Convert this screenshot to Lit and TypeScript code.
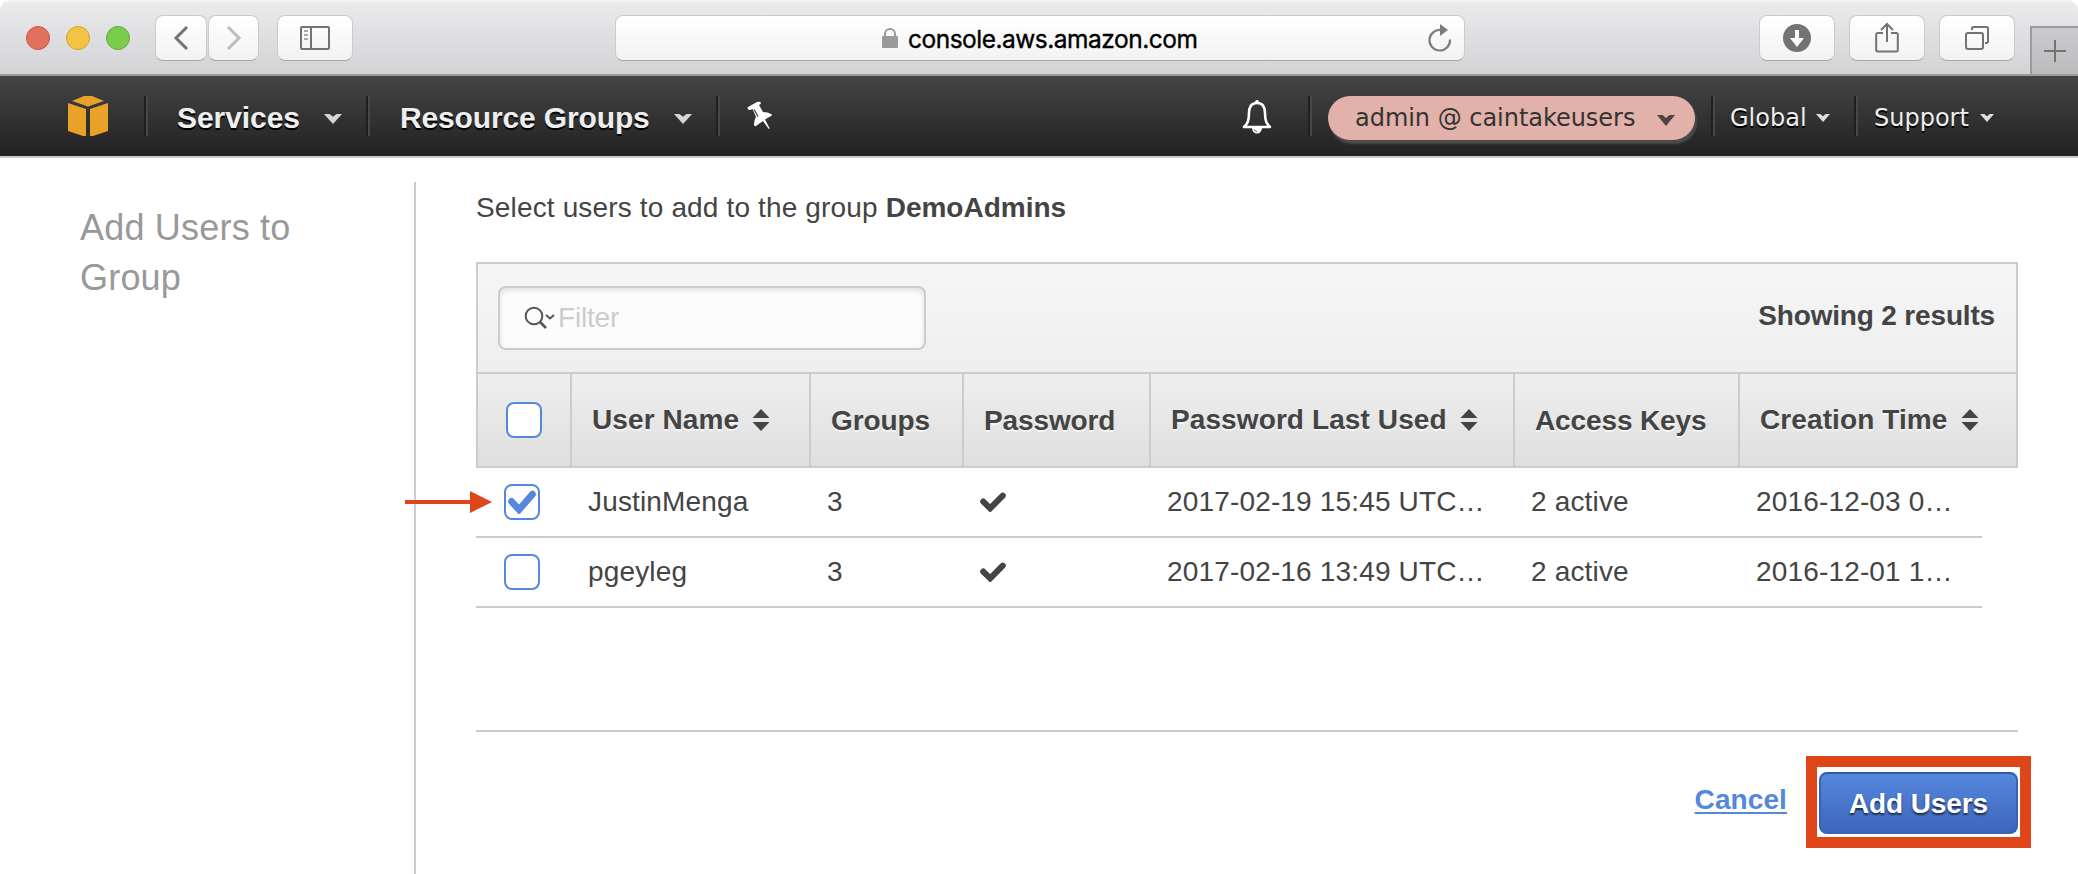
import { LitElement, html, css } from "lit";
import { customElement } from "lit/decorators.js";

const caret = (w: number, h: number, color: string) => html`<svg width=${w} height=${h} viewBox="0 0 18 10" preserveAspectRatio="none"><path d="M0 0H5.500L9 2.800L12.500 0H18L9 10Z" fill=${color}/></svg>`;
const sort = html`<svg class="sort" width="18" height="22" viewBox="0 0 18 22"><path d="M9 0L17.5 9H.5ZM.5 13H17.5L9 22Z" fill="#444"/></svg>`;
const tick = (w: number, h: number, color: string) => html`<svg width=${w} height=${h} viewBox="0 0 28 22" preserveAspectRatio="none"><path d="M3.5 10.5L11 18L24.5 4" fill="none" stroke=${color} stroke-width="6.6" stroke-linejoin="miter" stroke-linecap="round"/></svg>`;

@customElement("browser-bar")
export class BrowserBar extends LitElement {
  static styles = css`
    :host { display: block; background: #fff; }
    .bar { height: 76px; box-sizing: border-box; display: flex; align-items: flex-start; border-bottom: 2px solid #9b9b9b; border-radius: 11px 11px 0 0; overflow: hidden;
      background: linear-gradient(#f7f7f7 0, #ebebed 3px, #e3e3e5 24px, #d3d3d5 74px); }
    .dots { display: flex; gap: 16px; padding: 26px 0 0 26px; width: 129px; box-sizing: border-box; }
    .dot { width: 24px; height: 24px; border-radius: 50%; box-sizing: border-box; flex: none; border: 1px solid; }
    .red { background: #e2705f; border-color: #cc5646; }
    .yellow { background: #f1c443; border-color: #d5a22f; }
    .green { background: #7bcb4d; border-color: #5dac33; }
    .btn { height: 46px; margin-top: 15px; border-radius: 8px; background: linear-gradient(#fff, #f2f2f2); box-sizing: border-box; border: 1px solid #cbcbcd; border-bottom-color: #a9a9ab; display: flex; align-items: center; justify-content: center; flex: none; }
    .back { width: 52px; margin-left: 26px; }
    .fwd { width: 51px; margin-left: 1px; }
    .side { width: 76px; margin-left: 18px; }
    .url { width: 850px; margin-left: 262px; padding: 0 12px 0 266px; font: 400 24.5px/44px Inter, sans-serif; color: #000; justify-content: flex-start; }
    .host { margin-left: 10px; letter-spacing: -0.5px; flex: 1; -webkit-text-stroke: .35px #000; padding-top: 2px; }
    .tool { width: 76px; margin-left: 14px; }
    .first { margin-left: 294px; }
    .plus { margin: 26px 0 0 15px; width: 48px; height: 50px; box-sizing: border-box; border: solid #9c9c9e; border-width: 2px 0 0 2px; background: linear-gradient(#cbcbcd, #bbbbbd); padding: 12px 0 0 12px; flex: none; }
    svg { display: block; flex: none; }
  `;
  render() {
    return html`<div class="bar">
      <div class="dots"><i class="dot red"></i><i class="dot yellow"></i><i class="dot green"></i></div>
      <div class="btn back"><svg width="16" height="26" viewBox="0 0 16 26"><path d="M14 2L3 13L14 24" fill="none" stroke="#737373" stroke-width="3"/></svg></div>
      <div class="btn fwd"><svg width="16" height="26" viewBox="0 0 16 26"><path d="M2 2L13 13L2 24" fill="none" stroke="#bdbdbd" stroke-width="3"/></svg></div>
      <div class="btn side"><svg width="30" height="24" viewBox="0 0 30 24"><rect x="1" y="1" width="28" height="22" rx="1" fill="none" stroke="#737373" stroke-width="2"/><path d="M11 1V23" stroke="#737373" stroke-width="2"/><path d="M4 5H8M4 9H8M4 13H8" stroke="#909090" stroke-width="1.6"/></svg></div>
      <div class="btn url"><svg width="16" height="20" viewBox="0 0 16 20"><rect y="8" width="16" height="12" rx="1" fill="#9a9a9a"/><path d="M3 9V6a5 5 0 0 1 10 0V9" fill="none" stroke="#9a9a9a" stroke-width="2"/></svg><span class="host">console.aws.amazon.com</span>
        <svg width="24" height="28" viewBox="0 0 24 28"><path d="M13 6A10.300 10.300 0 1 0 22 15.500" fill="none" stroke="#7d7d7d" stroke-width="2.2"/><path d="M12 0L20 6L12 12Z" fill="#7d7d7d"/></svg></div>
      <div class="btn tool first"><svg width="28" height="28" viewBox="0 0 28 28"><circle cx="14" cy="14" r="14" fill="#737373"/><path d="M12 6H16V14H21L14 23L7 14H12Z" fill="#fbfbfb"/></svg></div>
      <div class="btn tool"><svg width="24" height="32" viewBox="0 0 24 32"><path d="M8 11H2.500Q1.200 11 1.200 12.500V28Q1.200 29.500 2.500 29.500H21.500Q22.800 29.500 22.800 28V12.500Q22.800 11 21.500 11H16M12 20V2M6 8L12 2L18 8" fill="none" stroke="#737373" stroke-width="2"/></svg></div>
      <div class="btn tool"><svg width="24" height="24" viewBox="0 0 24 24"><rect x="1" y="7" width="17" height="16" rx="2" fill="none" stroke="#737373" stroke-width="2"/><path d="M7 4V2.500Q7 1 8.500 1H21.500Q23 1 23 2.500V15Q23 17 21.500 17H20" fill="none" stroke="#737373" stroke-width="2"/></svg></div>
      <div class="plus"><svg width="22" height="22" viewBox="0 0 22 22"><path d="M11 0V22M0 11H22" stroke="#737373" stroke-width="2"/></svg></div>
    </div>`;
  }
}

@customElement("console-nav")
export class ConsoleNav extends LitElement {
  static styles = css`
    :host { display: block; }
    .nav { height: 82px; box-sizing: border-box; border-bottom: 2px solid #ccc; background: linear-gradient(#444, #222); display: flex; align-items: center; padding-left: 68px; color: #eee; font: 24px/40px "DejaVu Sans", Verdana, sans-serif; text-shadow: 0 2px 0 #000; white-space: nowrap; }
    svg { display: block; flex: none; }
    .item { height: 40px; box-sizing: border-box; display: flex; align-items: center; flex: none; }
    .item span { flex: none; }
    .menu { font: bold 30px/40px "Liberation Sans", Arial, sans-serif; border-left: 2px solid #1f1f1f; padding-left: 31px; box-shadow: inset 2px 0 #484848; }
    .menu span { padding-top: 3px; letter-spacing: -.06px; }
    .menu svg { margin: 6px 0 0 24px; }
    .logo { width: 76px; }
    .services { width: 222px; }
    .groups { width: 350px; padding-left: 32px; }
    .groups span { letter-spacing: -.14px; }
    .sep { border-left: 2px solid #1f1f1f; box-shadow: inset 2px 0 #484848; }
    .pin { width: 526px; padding-left: 29px; }
    .bell { width: 66px; padding-top: 2px; }
    .account { width: 403px; padding: 4px 0 0 18px; }
    .pill { width: 367px; height: 44px; border-radius: 22px; background: #e2b1a9; color: #333; text-shadow: none; box-shadow: 2px 4px 2px #4c4c4c; display: flex; align-items: center; padding-left: 27px; box-sizing: border-box; flex: none; }
    .pill span { width: 302px; letter-spacing: -.03px; }
    .pill svg { margin-top: 5px; }
    .global { width: 143px; padding: 3px 0 0 17px; }
    .global span { width: 86px; }
    .support { padding: 3px 0 0 18px; }
    .support span { width: 106px; }
  `;
  render() {
    return html`<div class="nav">
      <div class="item logo"><svg width="40" height="40" viewBox="0 0 40 40" fill="#e9a128"><path d="M4 5L16 0H24L36 5L20 10.500ZM0 7L18 13V40H15L0 35ZM40 7L22 13V40H25L40 35Z"/></svg></div>
      <div class="item menu services"><span>Services</span>${caret(18, 10, "#d5d5d5")}</div>
      <div class="item menu groups"><span>Resource Groups</span>${caret(18, 10, "#d5d5d5")}</div>
      <div class="item sep pin"><svg width="26" height="30" viewBox="0 0 26 30"><path d="M1 8Q0 7 1 6L10 1Q13 0 14 2Q14 3 12 4L16 11Q21 11 24 13Q26 14 24 15L18 18.500L22.500 27Q22.500 29 21 27L16 20L9 25Q7 26 7 23Q7 19 9 16L5.500 8Q2 10 1 8Z" fill="#fff"/><path d="M7 8.500L11 15.500" stroke="#444" stroke-width="1.300"/></svg></div>
      <div class="item bell"><svg width="30" height="34" viewBox="0 0 30 34"><path d="M15 3C8.500 3 7 8 7 13C7 21 5.500 23.500 2 27H28C24.500 23.500 23 21 23 13C23 8 21.500 3 15 3Z" fill="none" stroke="#fff" stroke-width="2.600" stroke-linejoin="round"/><circle cx="15" cy="2" r="2" fill="#fff"/><path d="M10 28H20A5 5.500 0 0 1 10 28Z" fill="#fff"/><path d="M12 29.500Q13 31.500 15 31.500" stroke="#555" fill="none"/></svg></div>
      <div class="item sep account"><div class="pill"><span>admin @ caintakeusers</span>${caret(18, 11, "#4e4442")}</div></div>
      <div class="item sep global"><span>Global</span>${caret(14, 8, "#ddd")}</div>
      <div class="item sep support"><span>Support</span>${caret(14, 8, "#ddd")}</div>
    </div>`;
  }
}

interface User { name: string; groups: number; used: string; keys: string; created: string; picked: boolean; }

@customElement("app-root")
export class AppRoot extends LitElement {
  static styles = css`
    :host { display: block; height: 874px; overflow: hidden; background: #fff; color: #444; font: 28px/32px "Liberation Sans", Arial, sans-serif; white-space: nowrap; }
    svg { display: block; flex: none; }
    .page { display: flex; height: 716px; }
    .aside { width: 414px; box-sizing: border-box; padding: 45px 0 0 80px; font-size: 36px; line-height: 50px; color: #999; flex: none; letter-spacing: .2px; }
    .main { margin-top: 24px; border-left: 2px solid #ccc; padding-left: 60px; flex: none; width: 1542px; }
    .intro { margin: 10px 0 38px; letter-spacing: .15px; }
    .intro b { letter-spacing: 0; }
    .panel { border: 2px solid #ccc; box-sizing: border-box; height: 206px; }
    .tools { height: 108px; display: flex; align-items: center; justify-content: space-between; padding: 0 21px 0 20px; background: linear-gradient(#f6f6f6, #eee); border-bottom: 2px solid #ccc; }
    .filter { width: 428px; height: 64px; box-sizing: border-box; border: 2px solid #ccc; border-radius: 8px; background: #fcfcfc; box-shadow: inset 0 2px 5px #ddd; display: flex; align-items: center; padding-left: 24px; color: #ccc; }
    .filter span { margin-left: 2px; letter-spacing: -.2px; }
    .count { font-weight: bold; margin-top: -4px; letter-spacing: -.17px; }
    .grid { display: grid; grid-template-columns: 92px 239px 153px 187px 364px 225px 1fr; }
    .head { height: 92px; background: linear-gradient(#eee, #dfdfdf); font-weight: bold; text-shadow: 0 2px 0 #f5f5f5; }
    .head .cell { border-left: 2px solid #ccc; padding-left: 20px; box-sizing: border-box; display: flex; align-items: center; letter-spacing: .1px; }
    .head .cell:first-child { border: 0; padding-left: 28px; }
    .head .low { padding-top: 2px; letter-spacing: -.12px; }
    .sort { margin: 0 0 0 13px; }
    .check { width: 36px; height: 36px; border: 2px solid #5587dd; border-radius: 8px; box-sizing: border-box; background: #fff; display: flex; align-items: center; justify-content: center; flex: none; }
    .rows { width: 1506px; }
    .row { height: 70px; box-sizing: border-box; border-bottom: 2px solid #ccc; grid-template-columns: 96px 239px 153px 187px 364px 225px 1fr; letter-spacing: .16px; }
    .row .cell { display: flex; align-items: center; padding-left: 16px; position: relative; }
    .row .cell:first-child { padding-left: 28px; }
    .arrow { position: absolute; left: -71px; top: 23px; }
    .footer { margin-top: 122px; border-top: 2px solid #ccc; display: flex; justify-content: flex-end; align-items: flex-start; }
    .cancel { color: #5587dd; font-weight: bold; text-decoration: underline; text-decoration-thickness: 2px; text-underline-offset: 3px; text-decoration-skip-ink: none; margin: 52px 19px 0 0; letter-spacing: .1px; }
    .mark { border: 11px solid #de4619; padding: 5px 2px 3px; margin: 24px -13px 0 0; }
    .add { width: 199px; height: 62px; box-sizing: border-box; border: 2px solid #3863b4; border-top-color: #3159a9; border-radius: 8px; background: linear-gradient(#5587dd, #3d66bb); color: #fff; font: bold 28px/58px "Liberation Sans", Arial, sans-serif; letter-spacing: -.1px; text-align: center; text-shadow: 0 2px 2px #1c2c4b; padding: 1px 0 0; display: block; }
  `;

  users: User[] = [
    { name: "JustinMenga", groups: 3, used: "2017-02-19 15:45 UTC…", keys: "2 active", created: "2016-12-03 0…", picked: true },
    { name: "pgeyleg", groups: 3, used: "2017-02-16 13:49 UTC…", keys: "2 active", created: "2016-12-01 1…", picked: false },
  ];

  row(u: User) {
    return html`<div class="grid row">
      <div class="cell"><div class="check">${u.picked ? tick(28, 24, "#5587dd") : ""}</div>
        ${u.picked ? html`<svg class="arrow" width="88" height="22" viewBox="0 0 88 22"><path d="M0 9H65V0L87 11L65 22V13H0Z" fill="#de4619"/></svg>` : ""}</div>
      <div class="cell">${u.name}</div><div class="cell">${u.groups}</div>
      <div class="cell">${tick(26, 20, "#444")}</div>
      <div class="cell">${u.used}</div><div class="cell">${u.keys}</div><div class="cell">${u.created}</div>
    </div>`;
  }

  render() {
    return html`<browser-bar></browser-bar><console-nav></console-nav>
      <div class="page">
        <div class="aside">Add Users to<br>Group</div>
        <div class="main">
          <div class="intro">Select users to add to the group <b>DemoAdmins</b></div>
          <div class="panel">
            <div class="tools">
              <div class="filter"><svg width="32" height="24" viewBox="0 0 32 24"><circle cx="10" cy="10" r="8.300" fill="none" stroke="#555" stroke-width="2"/><path d="M16 16L22 22" stroke="#555" stroke-width="2.500"/><path d="M22 9L26 12.500L30 9" fill="none" stroke="#555" stroke-width="2"/></svg><span>Filter</span></div>
              <div class="count">Showing 2 results</div>
            </div>
            <div class="grid head">
              <div class="cell"><div class="check"></div></div>
              <div class="cell">User Name${sort}</div><div class="cell low">Groups</div><div class="cell low">Password</div>
              <div class="cell">Password Last Used${sort}</div><div class="cell low">Access Keys</div><div class="cell">Creation Time${sort}</div>
            </div>
          </div>
          <div class="rows">${this.users.map((u) => this.row(u))}</div>
          <div class="footer"><a class="cancel">Cancel</a><div class="mark"><button class="add">Add Users</button></div></div>
        </div>
      </div>`;
  }
}
